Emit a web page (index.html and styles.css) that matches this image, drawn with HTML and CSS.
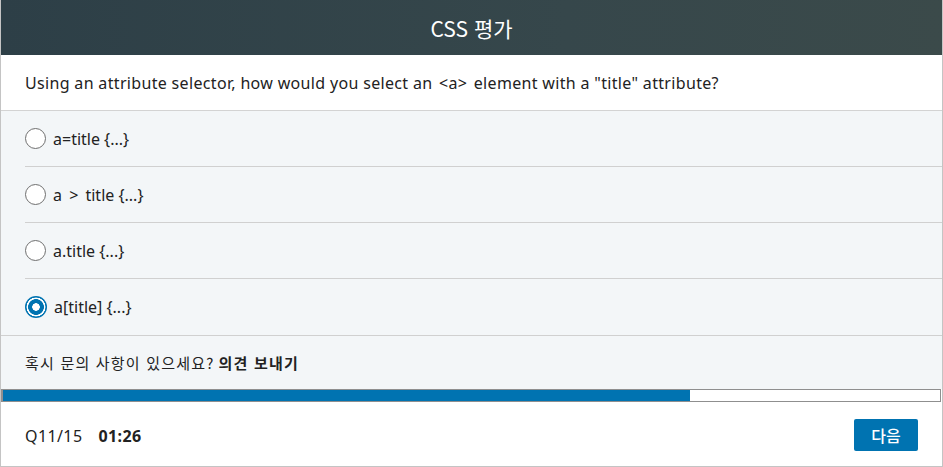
FILE: index.html
```html
<!DOCTYPE html>
<html lang="ko">
<head>
<meta charset="utf-8">
<link rel="stylesheet" href="styles.css">
</head>
<body>
<div class="card">
  <header class="head">CSS 평가</header>
  <div class="question">Using an attribute selector, how would you select an <code class="tag">&lt;a&gt;</code> element with a "title" attribute?</div>
  <div class="options">
    <label class="option"><span class="radio"></span><span class="opt-text">a=title {...}</span></label>
    <label class="option"><span class="radio"></span><span class="opt-text">a <span class="op">&gt;</span> title {...}</span></label>
    <label class="option"><span class="radio"></span><span class="opt-text">a.title {...}</span></label>
    <label class="option"><span class="radio checked"></span><span class="opt-text">a[title] {...}</span></label>
  </div>
  <div class="feedback">혹시 문의 사항이 있으세요? <b>의견 보내기</b></div>
  <div class="progress"><div class="bar" style="width: 73.3%"></div></div>
  <footer class="foot">
    <div class="status"><span class="count">Q11/15</span><span class="time">01:26</span></div>
    <button class="next">다음</button>
  </footer>
</div>
</body>
</html>
```
FILE: styles.css
```css
* { box-sizing: border-box; }
body {
  margin: 0;
  font-family: "Noto Sans", "Noto Sans CJK KR", sans-serif;
  color: #222;
  background: #fff;
}
.card {
  width: 943px;
  height: 467px;
  border: 1px solid #c4c4c4;
  border-top: none;
  display: flex;
  flex-direction: column;
}
.head {
  height: 55px;
  background: linear-gradient(90deg, #2d3f47 0%, #36474b 60%, #3b4a4a 100%);
  color: #fff;
  font-family: "Noto Sans CJK KR", sans-serif;
  font-size: 21px;
  display: flex;
  align-items: center;
  justify-content: center;
}
.question {
  height: 56px;
  padding: 0 24px;
  display: flex;
  align-items: center;
  font-size: 16px;
  letter-spacing: 0.33px;
  border-bottom: 1px solid #d3d3d3;
  white-space: pre;
}
.tag {
  font-family: inherit;
  font-size: inherit;
  margin: 0 2px;
}
.options {
  background: #f3f6f8;
  border-bottom: 1px solid #d0d0d0;
}
.option {
  height: 56px;
  margin-left: 24px;
  display: flex;
  align-items: center;
  gap: 7px;
  font-size: 16px;
  letter-spacing: 0;
  border-bottom: 1px solid #d0d0d0;
}
.option:last-child { border-bottom: none; }
.op { margin: 0 3px; }
.radio {
  width: 21px;
  height: 21px;
  border-radius: 50%;
  border: 1px solid #6f6f6f;
  background: #fff;
  flex: none;
}
.radio.checked {
  width: 22px;
  height: 22px;
  border: none;
  background: radial-gradient(circle, #fff 0 3.5px, #0073b1 4px 7.6px, #fff 8.1px 9.2px, #0073b1 9.7px);
}
.feedback {
  height: 53px;
  background: #f3f6f8;
  padding: 0 24px;
  display: flex;
  align-items: center;
  font-family: "Noto Sans CJK KR", sans-serif;
  font-size: 15px;
  letter-spacing: 1.2px;
  gap: 4px;
}
.feedback b { font-weight: 700; }
.progress {
  height: 13px;
  border: 1px solid #8f8f8f;
  border-left-width: 2px;
  background: #fff;
  margin-right: 1px;
}
.bar {
  height: 100%;
  background: #0073b1;
}
.foot {
  flex: 1;
  display: flex;
  align-items: center;
  justify-content: space-between;
  padding: 0 24px 0 24px;
}
.status {
  display: flex;
  gap: 16px;
  font-size: 16px;
  letter-spacing: 0.4px;
  margin-top: 4px;
}
.time { font-weight: 700; }
.next {
  width: 64px;
  height: 32px;
  margin-top: 1px;
  background: #0073b1;
  color: #fff;
  border: none;
  border-radius: 2px;
  font-family: "Noto Sans CJK KR", sans-serif;
  font-size: 16px;
  font-weight: 500;
  padding: 0;
}
```
